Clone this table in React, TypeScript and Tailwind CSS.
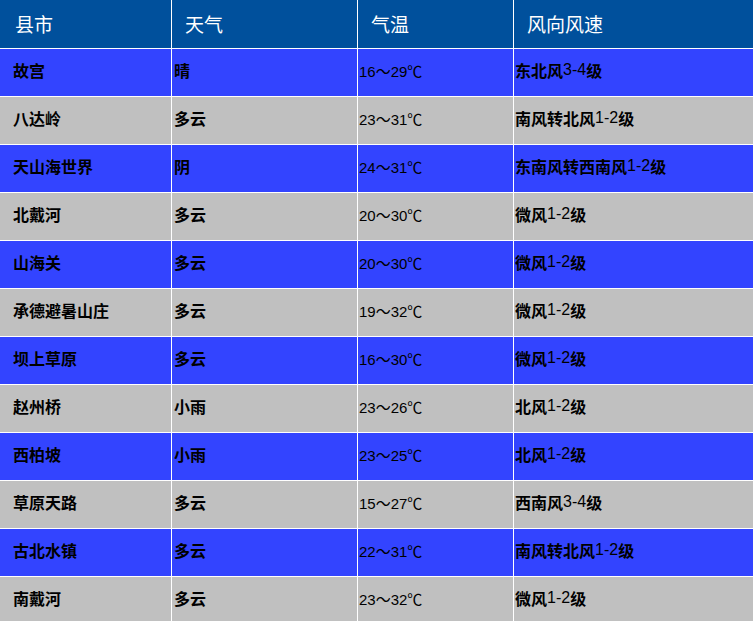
import { ReactNode } from "react";

interface Row {
  city: string;
  weather: string;
  temp: string;
  wind: string;
}

const rows: Row[] = [
  { city: "故宫", weather: "晴", temp: "16～29℃", wind: "东北风3-4级" },
  { city: "八达岭", weather: "多云", temp: "23～31℃", wind: "南风转北风1-2级" },
  { city: "天山海世界", weather: "阴", temp: "24～31℃", wind: "东南风转西南风1-2级" },
  { city: "北戴河", weather: "多云", temp: "20～30℃", wind: "微风1-2级" },
  { city: "山海关", weather: "多云", temp: "20～30℃", wind: "微风1-2级" },
  { city: "承德避暑山庄", weather: "多云", temp: "19～32℃", wind: "微风1-2级" },
  { city: "坝上草原", weather: "多云", temp: "16～30℃", wind: "微风1-2级" },
  { city: "赵州桥", weather: "小雨", temp: "23～26℃", wind: "北风1-2级" },
  { city: "西柏坡", weather: "小雨", temp: "23～25℃", wind: "北风1-2级" },
  { city: "草原天路", weather: "多云", temp: "15～27℃", wind: "西南风3-4级" },
  { city: "古北水镇", weather: "多云", temp: "22～31℃", wind: "南风转北风1-2级" },
  { city: "南戴河", weather: "多云", temp: "23～32℃", wind: "微风1-2级" },
];

const font = "font-['SimSun','Noto_Sans_CJK_SC',sans-serif]";

// digits in the bold text are drawn with a thin face in the original
const splitDigits = (text: string): ReactNode[] =>
  text.split(/([0-9-]+)/).map((part, i) =>
    /^[0-9-]+$/.test(part) ? (
      <span key={i} className="font-normal font-['Liberation_Sans',sans-serif]">
        {part}
      </span>
    ) : (
      <span key={i}>{part}</span>
    )
  );

const App = () => {
  const headers = ["县市", "天气", "气温", "风向风速"];

  return (
    <div className={`w-[753px] h-[621px] overflow-hidden bg-white ${font}`}>
      <div className="grid grid-cols-[171px_185px_155px_239px] gap-px bg-white">
        {/* Header */}
        {headers.map((h) => (
          <div
            key={h}
            className={`h-[48px] flex items-center bg-[#00509c] text-white text-[19px] leading-none pb-[2px] ${
              h === "县市" ? "pl-[15px]" : "pl-[13px]"
            }`}
          >
            {h}
          </div>
        ))}

        {/* Body */}
        {rows.map((r, i) => {
          const bg = i % 2 === 0 ? "bg-[#3344ff]" : "bg-[#c0c0c0]";
          const cell = `h-[47px] flex items-center leading-none text-black ${bg}`;
          return (
            <div key={r.city} className="contents">
              <div className={`${cell} pb-[5px] pl-[13px] text-[16px] font-bold`}>{r.city}</div>
              <div className={`${cell} pb-[5px] pl-[2px] text-[16px] font-bold`}>{r.weather}</div>
              <div
                className={`${cell} pb-[3px] pl-[1px] text-[15px] font-normal font-['Liberation_Sans','Noto_Sans_CJK_SC',sans-serif]`}
              >
                {r.temp}
              </div>
              <div className={`${cell} pb-[5px] pl-[1px] text-[16px] font-bold`}>{splitDigits(r.wind)}</div>
            </div>
          );
        })}
      </div>
    </div>
  );
};

export default App;
